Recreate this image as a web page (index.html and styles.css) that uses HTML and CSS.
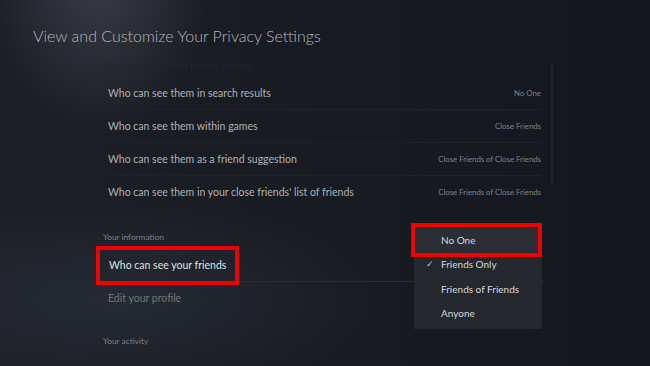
FILE: index.html
```html
<!DOCTYPE html>
<html lang="en">
  <head>
    <meta charset="UTF-8" />
    <meta name="viewport" content="width=device-width, initial-scale=1.0" />
    <title>Privacy Settings</title>
    <link rel="stylesheet" href="styles.css">
  </head>
  <body>
    <div class="screen">
      <h1 class="title">View and Customize Your Privacy Settings</h1>

      <div class="content">
        <div class="list-area">
          <div class="faded">Your real name and profile picture</div>
          <div class="list">
            <div class="row">
              <span class="label">Who can see them in search results</span>
              <span class="value">No One</span>
            </div>
            <div class="row">
              <span class="label">Who can see them within games</span>
              <span class="value">Close Friends</span>
            </div>
            <div class="row">
              <span class="label">Who can see them as a friend suggestion</span>
              <span class="value">Close Friends of Close Friends</span>
            </div>
            <div class="row last">
              <span class="label">Who can see them in your close friends' list of friends</span>
              <span class="value">Close Friends of Close Friends</span>
            </div>
          </div>
        </div>
        <div class="scrollbar"></div>
      </div>

      <div class="section">Your information</div>
      <div class="list lower">
        <div class="row focused">
          <span class="label">Who can see your friends</span>
          <div class="mark"></div>
        </div>
        <div class="row last dim">
          <span class="label">Edit your profile</span>
        </div>
      </div>
      <div class="section activity">Your activity</div>

      <!-- dropdown menu for the focused row -->
      <div class="menu">
        <div class="option selected">No One</div>
        <div class="option"><span class="check">&#10003;</span>Friends Only</div>
        <div class="option">Friends of Friends</div>
        <div class="option">Anyone</div>
        <div class="menu-mark"></div>
      </div>
    </div>
  </body>
</html>
```

FILE: styles.css
```css
body {
  margin: 0;
  padding: 0;
  background-color: #161920;
  font-family: Lato, "Open Sans", sans-serif;
}

.screen {
  position: relative;
  width: 650px;
  height: 366px;
  overflow: hidden;
  background:
    radial-gradient(ellipse 110px 150px at 100px -20px, rgba(120, 125, 140, 0.32), rgba(120, 125, 140, 0) 100%),
    radial-gradient(ellipse 280px 100px at 120px 300px, rgba(70, 80, 95, 0.25), rgba(70, 80, 95, 0) 100%),
    linear-gradient(90deg, #1c1f26 0%, #181b22 45%, #14171d 100%);
}

.title {
  margin: 0;
  padding: 26px 0 0 33px;
  height: 28px;
  font-size: 16px;
  font-weight: 300;
  color: #b5b8bd;
}

.content {
  display: flex;
  padding-left: 104px;
  height: 155px;
}

.list-area {
  width: 437px;
}

.faded {
  height: 23px;
  line-height: 23px;
  font-size: 10px;
  color: #22252c;
}

.list {
  padding-left: 4px;
}

.row {
  position: relative;
  display: flex;
  justify-content: space-between;
  align-items: center;
  height: 32px;
  border-bottom: 1px solid #1f2229;
}

.row.last {
  border-bottom: none;
}

.label {
  font-size: 10.5px;
  color: #aeb1b6;
}

.value {
  font-size: 7.8px;
  color: #80848a;
}

.scrollbar {
  width: 2px;
  height: 123px;
  margin: 9px 0 0 10px;
  background-color: #20232b;
}

.section {
  padding-left: 103px;
  margin-top: 21px;
  height: 14px;
  line-height: 14px;
  font-size: 8.3px;
  color: #7d8187;
}

.lower {
  margin-left: 104px;
  width: 437px;
  margin-top: 5px;
}

.focused {
  border-bottom-color: #2a2d34;
}

.focused .label {
  position: relative;
  z-index: 1;
  padding-left: 1px;
  color: #dfe1e3;
}

.dim .label {
  color: #71757b;
}

.section.activity {
  margin-top: 20px;
}

/* annotation boxes */
.mark {
  position: absolute;
  left: -12px;
  top: -3px;
  width: 135px;
  height: 31px;
  border: 4px solid #f00000;
  background-color: rgba(35, 38, 45, 0.4);
}

.menu {
  position: absolute;
  left: 414px;
  top: 227px;
  width: 128px;
  padding: 1px 0 4px;
  background-color: #24272d;
}

.option {
  position: relative;
  height: 24.3px;
  line-height: 24.3px;
  padding-left: 27px;
  font-size: 10px;
  color: #d6d8db;
}

.option.selected {
  background-color: #2b2e35;
}

.check {
  position: absolute;
  left: 12px;
  font-size: 9px;
  color: #c3c6ca;
}

.menu-mark {
  position: absolute;
  left: -3px;
  top: -4px;
  width: 123px;
  height: 26px;
  border: 4px solid #f00000;
}
```
